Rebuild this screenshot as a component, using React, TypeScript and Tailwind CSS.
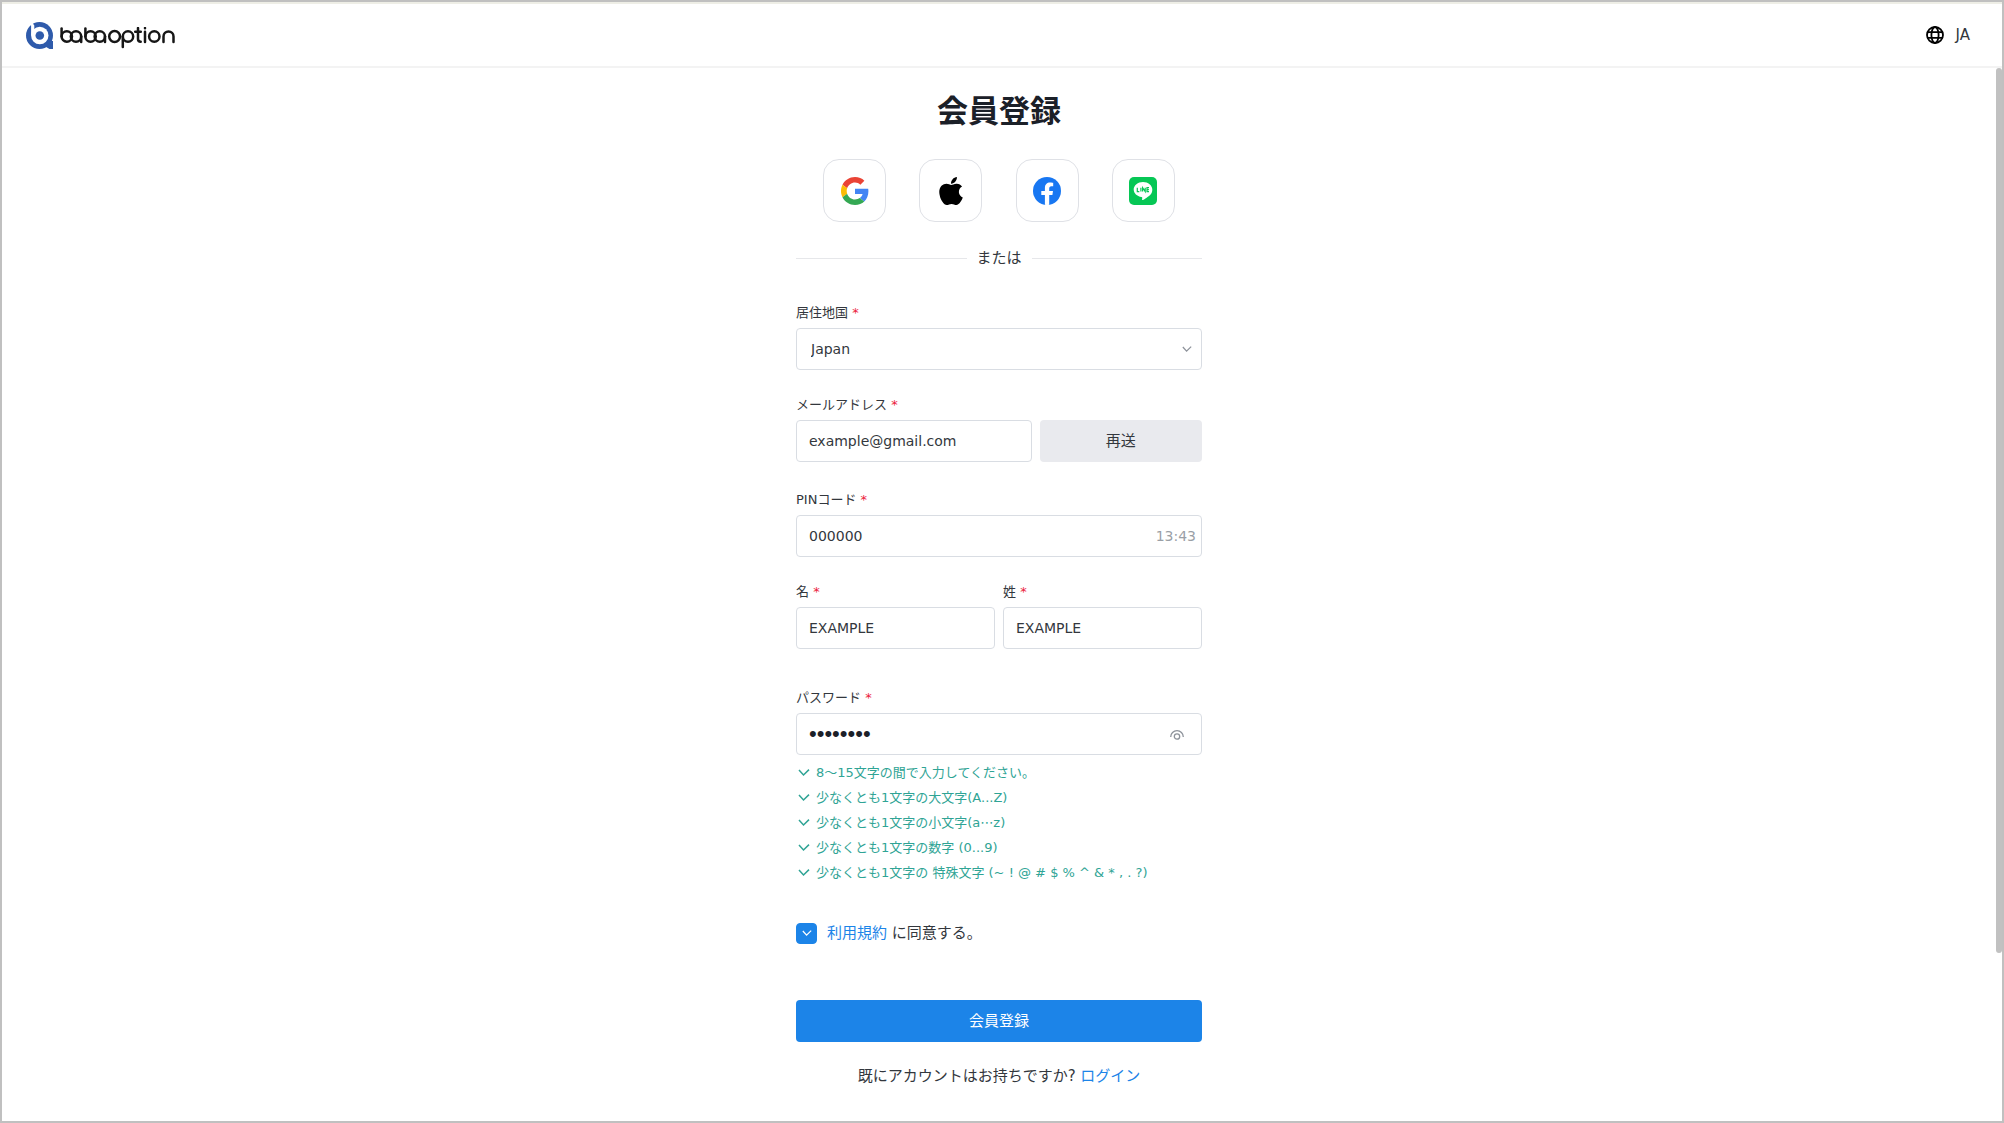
import { useState } from 'react';
import type { InputHTMLAttributes, ReactNode } from 'react';
import { FaApple } from 'react-icons/fa';

const boxClass =
  'block h-[42px] w-full rounded border border-[#d9dde3] bg-white px-3 outline-none focus:border-[#1c84e8]';

const passwordRules = [
  '8〜15文字の間で入力してください。',
  '少なくとも1文字の大文字(A...Z)',
  '少なくとも1文字の小文字(a⋯z)',
  '少なくとも1文字の数字 (0...9)',
  '少なくとも1文字の 特殊文字 (~ ! @ # $ % ^ & * , . ?)',
];

function Logo() {
  return (
    <a href="#" aria-label="babaoption" className="flex items-center gap-[7px]">
      <svg viewBox="0 0 27 27" className="size-[27px]" fill="none">
        <circle cx="13.5" cy="13.5" r="13.5" fill="#2f5bab" />
        <path d="M19 19h8v8h-3.5l-5-3Z" fill="#2f5bab" />
        <circle cx="13.8" cy="13.5" r="8.7" fill="#fff" />
        <path d="M5.1 3.5 3.5 2.2 6 .3 8.3 3.5V13H5.1Z" fill="#fff" />
        <circle cx="13.8" cy="13.5" r="4.3" fill="#2f5bab" />
      </svg>
      <svg
        viewBox="0 0 115 22"
        className="mt-1.5 h-[22px] w-[115px]"
        fill="none"
        stroke="#161616"
        strokeWidth="2.5"
        strokeLinecap="round"
        strokeLinejoin="round"
      >
        <path d="M1.6 1.5V9.5" />
        <circle cx="6.8" cy="9.5" r="5.2" />
        <circle cx="16" cy="9.5" r="5.2" />
        <path d="M21.2 9.5V15" />
        <path d="M25.4 1.5V9.5" />
        <circle cx="30.6" cy="9.5" r="5.2" />
        <circle cx="39.8" cy="9.5" r="5.2" />
        <path d="M45 9.5V15" />
        <circle cx="54.6" cy="9.5" r="5.4" />
        <path d="M62.8 20V9.5" />
        <circle cx="68" cy="9.5" r="5.2" />
        <path d="M78 1V12q0 2.7 2.7 2.7M75.2 4.8h5.6" />
        <path d="M85 4.8V15M85 1v.2" />
        <circle cx="94.3" cy="9.5" r="5.2" />
        <path d="M103.5 15V9.5a5 5 0 0 1 10 0V15" />
      </svg>
    </a>
  );
}

function GlobeIcon() {
  return (
    <svg viewBox="0 0 18 18" className="size-[18px]" fill="none" stroke="#000" strokeWidth="1.8">
      <circle cx="9" cy="9" r="8" />
      <ellipse cx="9" cy="9" rx="3.6" ry="8" />
      <path d="M1.5 6.2h15M1.5 11.8h15" />
    </svg>
  );
}

function GoogleIcon() {
  return (
    <svg viewBox="0 0 48 48" className="size-7">
      <path
        fill="#ea4335"
        d="M24 9.5c3.54 0 6.71 1.22 9.21 3.6l6.85-6.85C35.9 2.38 30.47 0 24 0 14.62 0 6.51 5.38 2.56 13.22l7.98 6.19C12.43 13.72 17.74 9.5 24 9.5z"
      />
      <path
        fill="#4285f4"
        d="M46.98 24.55c0-1.57-.15-3.09-.38-4.55H24v9.02h12.94c-.58 2.96-2.26 5.48-4.78 7.18l7.73 6c4.51-4.18 7.09-10.36 7.09-17.65z"
      />
      <path
        fill="#fbbc05"
        d="M10.53 28.59c-.48-1.45-.76-2.99-.76-4.59s.27-3.14.76-4.59l-7.98-6.19C.92 16.46 0 20.12 0 24c0 3.88.92 7.54 2.56 10.78l7.97-6.19z"
      />
      <path
        fill="#34a853"
        d="M24 48c6.48 0 11.93-2.13 15.89-5.81l-7.73-6c-2.15 1.45-4.92 2.3-8.16 2.3-6.26 0-11.57-4.22-13.47-9.91l-7.98 6.19C6.51 42.62 14.62 48 24 48z"
      />
    </svg>
  );
}

function FacebookIcon() {
  return (
    <svg viewBox="0 0 28 28" className="size-7">
      <circle cx="14" cy="14" r="14" fill="#1877f2" />
      <path
        d="M19.4 18 20 14h-3.8v-2.6c0-1.1.5-2.2 2.2-2.2H20.2V5.8s-1.6-.3-3.1-.3c-3.1 0-5.2 1.9-5.2 5.4V14H8.3v4h3.6v9.8a14 14 0 0 0 4.3 0V18Z"
        fill="#fff"
      />
    </svg>
  );
}

function LineIcon() {
  return (
    <svg viewBox="0 0 28 28" className="size-7">
      <rect width="28" height="28" rx="5" fill="#06c755" />
      <path
        d="M23.3 12.6c0-4.2-4.2-7.6-9.3-7.6s-9.3 3.4-9.3 7.6c0 3.7 3.3 6.9 7.8 7.5.9.2.8.6.6 2.3 0 .3-.2 1 .9.6 1.1-.5 6-3.5 8-6 .9-1.1 1.3-2.7 1.3-4.4Z"
        fill="#fff"
      />
      <path
        d="M8.3 10.7v3.9h2M11.9 10.7v3.9M13.6 14.6v-3.9l2.6 3.9v-3.9M20 10.7h-2v3.9h2M18 12.6h1.9"
        fill="none"
        stroke="#06c755"
        strokeWidth="1.2"
      />
    </svg>
  );
}

function EyeIcon() {
  return (
    <svg viewBox="0 0 14 12" className="h-3 w-3.5" fill="none" stroke="#8d929a" strokeWidth="1.3">
      <path d="M.7 9a6.3 6.3 0 1 1 12.6 0" />
      <circle cx="7" cy="8.5" r="2.7" />
    </svg>
  );
}

function CheckIcon({ className }: { className: string }) {
  return (
    <svg viewBox="0 0 12 8" className={className} fill="none" stroke="currentColor" strokeWidth="1.5">
      <path d="M1 1 5.5 6 11 .6" />
    </svg>
  );
}

function Field({ id, label, children }: { id: string; label: string; children: ReactNode }) {
  return (
    <div className="flex min-w-0 flex-1 flex-col gap-[5px]">
      <label htmlFor={id} className="text-[13px] leading-5">
        {label} <span className="text-[#ec1c3c]">*</span>
      </label>
      {children}
    </div>
  );
}

function TextInput(props: InputHTMLAttributes<HTMLInputElement>) {
  return <input {...props} className={`${boxClass} text-sm`} />;
}

export default function App() {
  const [agreed, setAgreed] = useState(true);
  const [showPassword, setShowPassword] = useState(false);

  const providers = [
    { name: 'Google', icon: <GoogleIcon /> },
    { name: 'Apple', icon: <FaApple className="size-8" /> },
    { name: 'Facebook', icon: <FacebookIcon /> },
    { name: 'LINE', icon: <LineIcon /> },
  ];

  return (
    <div
      lang="ja"
      className="flex min-h-screen flex-col border-2 border-[#c0c0c0] bg-white font-['DejaVu_Sans','Noto_Sans_CJK_JP',sans-serif] text-[#33373d]"
    >
      <header className="flex h-[66px] items-center justify-between border-t-2 border-b-2 border-t-[#eeeee6] border-b-[#f3f3f3] pr-8 pl-6">
        <Logo />
        <button type="button" className="flex items-center gap-3 text-[15px]">
          <GlobeIcon />
          JA
        </button>
      </header>

      <div className="flex flex-1">
        <main className="flex flex-1 justify-center">
          <form className="w-full max-w-[406px] pt-[21px]" onSubmit={(e) => e.preventDefault()}>
            <h1 className="text-center text-[31px] leading-[44px] font-bold text-[#1b2028]">会員登録</h1>

            {/* Social sign up */}
            <div className="mx-[27px] mt-[26px] flex justify-between">
              {providers.map((provider) => (
                <button
                  key={provider.name}
                  type="button"
                  aria-label={provider.name}
                  className="flex size-[63px] items-center justify-center rounded-2xl border border-[#dfe1e6] text-black"
                >
                  {provider.icon}
                </button>
              ))}
            </div>

            <div className="mt-6 flex items-center gap-2.5 text-[15px] leading-6">
              <span className="h-px flex-1 bg-[#e6e7ea]" />
              または
              <span className="h-px flex-1 bg-[#e6e7ea]" />
            </div>

            {/* Account details */}
            <div className="mt-[33px] flex">
              <Field id="country" label="居住地国">
                <div className="relative">
                  <select id="country" className={`${boxClass} appearance-none pl-3.5 text-sm`}>
                    <option>Japan</option>
                  </select>
                  <CheckIcon className="pointer-events-none absolute top-[18px] right-2.5 h-[7px] w-2.5 text-[#8d929a]" />
                </div>
              </Field>
            </div>

            <div className="mt-[25px] flex items-end gap-2">
              <Field id="email" label="メールアドレス">
                <TextInput id="email" type="email" defaultValue="example@gmail.com" />
              </Field>
              <button type="button" className="h-[42px] w-2/5 rounded bg-[#e9eaee] text-[15px]">
                再送
              </button>
            </div>

            <div className="mt-7 flex">
              <Field id="pin" label="PINコード">
                <div className="relative">
                  <TextInput id="pin" type="text" defaultValue="000000" />
                  <span className="absolute inset-y-0 right-1.5 flex items-center text-sm text-[#9a9fa6]">13:43</span>
                </div>
              </Field>
            </div>

            <div className="mt-[25px] flex gap-2">
              <Field id="first-name" label="名">
                <TextInput id="first-name" type="text" defaultValue="EXAMPLE" />
              </Field>
              <Field id="last-name" label="姓">
                <TextInput id="last-name" type="text" defaultValue="EXAMPLE" />
              </Field>
            </div>

            <div className="mt-[39px] flex">
              <Field id="password" label="パスワード">
                <div className="relative">
                  <input
                    id="password"
                    type={showPassword ? 'text' : 'password'}
                    defaultValue="Example1"
                    className={`${boxClass} font-['Liberation_Sans',sans-serif] text-[22px] text-[#1b2028]`}
                  />
                  <button
                    type="button"
                    aria-label="パスワードを表示"
                    onClick={() => setShowPassword(!showPassword)}
                    className="absolute inset-y-0 right-[18px] flex items-center"
                  >
                    <EyeIcon />
                  </button>
                </div>
              </Field>
            </div>

            <ul className="mt-[5px] pl-0.5 text-[13px] leading-[25px] text-[#2fa495]">
              {passwordRules.map((rule) => (
                <li key={rule} className="flex items-center gap-1.5">
                  <CheckIcon className="h-2 w-3" />
                  {rule}
                </li>
              ))}
            </ul>

            <div className="mt-[38px] flex items-center gap-2.5 text-[15px] leading-[21px]">
              <span className="relative flex size-[21px]">
                <input
                  id="terms"
                  type="checkbox"
                  checked={agreed}
                  onChange={(e) => setAgreed(e.target.checked)}
                  className="size-[21px] appearance-none rounded border border-[#d9dde3] checked:border-[#1c84e8] checked:bg-[#1c84e8]"
                />
                {agreed && (
                  <CheckIcon className="pointer-events-none absolute inset-0 m-auto h-[7px] w-2.5 text-white" />
                )}
              </span>
              <label htmlFor="terms">
                <a href="#" className="text-[#1c84e8]">利用規約</a> に同意する。
              </label>
            </div>

            <button type="submit" className="mt-14 h-[42px] w-full rounded bg-[#1c84e8] text-[15px] text-white">
              会員登録
            </button>

            <p className="mt-[22px] text-center text-[15px] leading-6">
              既にアカウントはお持ちですか? <a href="#" className="text-[#1c84e8]">ログイン</a>
            </p>
          </form>
        </main>

        {/* Scroll track */}
        <div className="w-1.5">
          <div className="h-[84%] rounded-full bg-[#c1c1c1]" />
        </div>
      </div>
    </div>
  );
}
